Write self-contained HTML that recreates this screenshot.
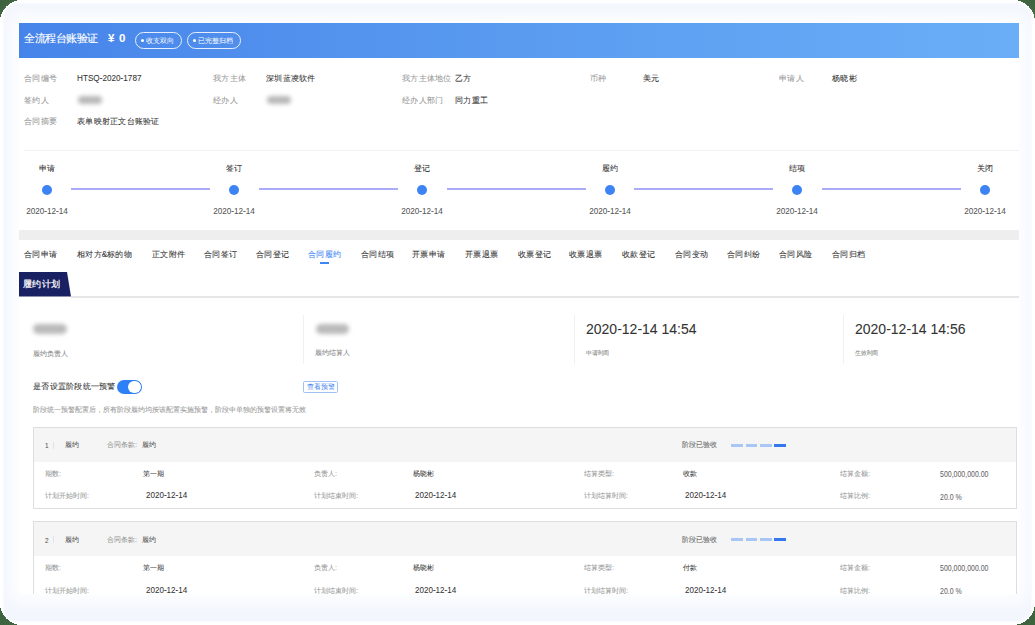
<!DOCTYPE html>
<html><head><meta charset="utf-8"><style>
*{margin:0;padding:0;box-sizing:border-box}
html,body{width:1035px;height:625px;overflow:hidden;background:#3d643f}
body{font-family:"Liberation Sans",sans-serif;position:relative;color:#333}
#outer{position:absolute;left:0;top:0}
#frame{position:absolute;left:3.5px;top:3.5px;width:1027.5px;height:617px;background:#f3f7fd;border-radius:14px;box-shadow:0 0 1.5px 0.5px #f7faff}
#page{position:absolute;left:19px;top:23px;width:1000px;height:570.6px;background:#fff;overflow:hidden}
#glow{position:absolute;left:19px;top:23px;width:1000px;height:570.6px;box-shadow:0 0 16px 6px #fff}
.t{position:absolute;white-space:nowrap;line-height:1;transform-origin:0 0;-webkit-text-stroke:0.25px currentColor}
.b{position:absolute}
.lbl{font-size:8.2px;color:#999}
.val{font-size:8.2px;color:#333}
.blur{background:#b8b8b8;border-radius:4px;filter:blur(2px)}
.blur2{background:#bababa;border-radius:5px;filter:blur(2.2px)}
.badge{position:absolute;height:17px;border:1px solid rgba(255,255,255,.85);border-radius:9px;color:#fff;font-size:7px;line-height:15px;padding-left:10px;white-space:nowrap}
.badge:before{content:"";position:absolute;left:4.5px;top:6px;width:3px;height:3px;border-radius:50%;background:#fff}
.stp{font-size:8.2px;color:#333}
.sdate{color:#555}
.dot{border-radius:50%;background:#3d83f3}
.tab{font-size:8.2px;color:#333}
.tab.act{color:#4287f5}
.slbl{font-size:7px;color:#888}
.slbl2{font-size:5.8px;color:#888}
.bigd{color:#333}
.tog{width:25px;height:14px;border-radius:7px;background:#2e80f6}
.tog:after{content:"";position:absolute;right:1px;top:0.9px;width:12.2px;height:12.2px;border-radius:50%;background:#fff}
.btn{width:35px;height:12px;border:1px solid #a0c0f6;border-radius:1.5px;color:#3d7ff0;font-size:6.8px;line-height:10px;text-align:center;white-space:nowrap}
.desc{font-size:7.2px;color:#999}
.card{border:1px solid #dedede;background:#fff}
.cl{font-size:7px;color:#999}
.cv{font-size:8px;color:#333}
</style></head>
<body>
<svg id="outer" width="1035" height="625" shape-rendering="crispEdges"><rect x="0" y="0" width="1035" height="625" rx="22" ry="22" fill="#fff"/></svg>
<div id="frame"></div>
<div id="glow"></div>
<div id="page">
<div class="b " style="left:0.00px;top:0.00px;width:1000.00px;height:35.00px;background:linear-gradient(90deg,#4784ea 0%,#5a9bf0 50%,#6aaef7 100%)"></div>
<div class="t " style="left:5.20px;top:16.20px;font-size:42.40px;transform:scale(.25) translateY(-50%);;color:#fff;-webkit-text-stroke:0.6px #fff">全流程台账验证</div>
<div class="t " style="left:89.10px;top:15.20px;font-size:46.00px;transform:scale(.25) translateY(-50%);;color:#fff;font-weight:bold">¥</div>
<div class="t " style="left:100.40px;top:15.20px;font-size:46.00px;transform:scale(.25) translateY(-50%);;color:#fff;font-weight:bold">0</div>
<div class="badge" style="left:116px;top:8.7px;width:47px">收支双向</div>
<div class="badge" style="left:168px;top:8.7px;width:54px">已完整归档</div>
<div class="t lbl" style="left:5.00px;top:55.10px;font-size:32.80px;transform:scale(.25) translateY(-50%);">合同编号</div>
<div class="t val" style="left:58.00px;top:54.60px;font-size:38.00px;transform:scale(0.2150,.25) translateY(-50%);">HTSQ-2020-1787</div>
<div class="t lbl" style="left:193.75px;top:55.10px;font-size:32.80px;transform:scale(.25) translateY(-50%);">我方主体</div>
<div class="t val" style="left:246.75px;top:55.10px;font-size:32.80px;transform:scale(.25) translateY(-50%);">深圳蓝凌软件</div>
<div class="t lbl" style="left:382.50px;top:55.10px;font-size:32.80px;transform:scale(.25) translateY(-50%);">我方主体地位</div>
<div class="t val" style="left:435.50px;top:55.10px;font-size:32.80px;transform:scale(.25) translateY(-50%);">乙方</div>
<div class="t lbl" style="left:571.25px;top:55.10px;font-size:32.80px;transform:scale(.25) translateY(-50%);">币种</div>
<div class="t val" style="left:624.25px;top:55.10px;font-size:32.80px;transform:scale(.25) translateY(-50%);">美元</div>
<div class="t lbl" style="left:760.00px;top:55.10px;font-size:32.80px;transform:scale(.25) translateY(-50%);">申请人</div>
<div class="t val" style="left:813.00px;top:55.10px;font-size:32.80px;transform:scale(.25) translateY(-50%);">杨晓彬</div>
<div class="t lbl" style="left:5.00px;top:76.70px;font-size:32.80px;transform:scale(.25) translateY(-50%);">签约人</div>
<div class="b blur" style="left:59.00px;top:72.70px;width:24.00px;height:8.00px;"></div>
<div class="t lbl" style="left:193.75px;top:76.70px;font-size:32.80px;transform:scale(.25) translateY(-50%);">经办人</div>
<div class="b blur" style="left:247.75px;top:72.70px;width:24.00px;height:8.00px;"></div>
<div class="t lbl" style="left:382.50px;top:76.70px;font-size:32.80px;transform:scale(.25) translateY(-50%);">经办人部门</div>
<div class="t val" style="left:435.50px;top:76.70px;font-size:32.80px;transform:scale(.25) translateY(-50%);">同力重工</div>
<div class="t lbl" style="left:5.00px;top:98.10px;font-size:32.80px;transform:scale(.25) translateY(-50%);">合同摘要</div>
<div class="t val" style="left:58.00px;top:98.10px;font-size:32.80px;transform:scale(.25) translateY(-50%);">表单映射正文台账验证</div>
<div class="b " style="left:5.00px;top:127.00px;width:995.00px;height:1.00px;background:#f2f2f2"></div>
<div class="t stp" style="left:27.60px;top:145.20px;font-size:32.80px;transform:scale(.25) translate(-50%,-50%);">申请</div>
<div class="b dot" style="left:22.60px;top:162.00px;width:10.00px;height:10.00px;"></div>
<div class="t sdate" style="left:27.60px;top:187.70px;font-size:36.80px;transform:scale(0.2213,.25) translate(-50%,-50%);">2020-12-14</div>
<div class="b " style="left:52.10px;top:165.00px;width:139.20px;height:2.00px;background:#aaabf9"></div>
<div class="t stp" style="left:215.30px;top:145.20px;font-size:32.80px;transform:scale(.25) translate(-50%,-50%);">签订</div>
<div class="b dot" style="left:210.30px;top:162.00px;width:10.00px;height:10.00px;"></div>
<div class="t sdate" style="left:215.30px;top:187.70px;font-size:36.80px;transform:scale(0.2213,.25) translate(-50%,-50%);">2020-12-14</div>
<div class="b " style="left:239.80px;top:165.00px;width:139.20px;height:2.00px;background:#aaabf9"></div>
<div class="t stp" style="left:403.00px;top:145.20px;font-size:32.80px;transform:scale(.25) translate(-50%,-50%);">登记</div>
<div class="b dot" style="left:398.00px;top:162.00px;width:10.00px;height:10.00px;"></div>
<div class="t sdate" style="left:403.00px;top:187.70px;font-size:36.80px;transform:scale(0.2213,.25) translate(-50%,-50%);">2020-12-14</div>
<div class="b " style="left:427.50px;top:165.00px;width:139.20px;height:2.00px;background:#aaabf9"></div>
<div class="t stp" style="left:590.70px;top:145.20px;font-size:32.80px;transform:scale(.25) translate(-50%,-50%);">履约</div>
<div class="b dot" style="left:585.70px;top:162.00px;width:10.00px;height:10.00px;"></div>
<div class="t sdate" style="left:590.70px;top:187.70px;font-size:36.80px;transform:scale(0.2213,.25) translate(-50%,-50%);">2020-12-14</div>
<div class="b " style="left:615.20px;top:165.00px;width:139.20px;height:2.00px;background:#aaabf9"></div>
<div class="t stp" style="left:778.40px;top:145.20px;font-size:32.80px;transform:scale(.25) translate(-50%,-50%);">结项</div>
<div class="b dot" style="left:773.40px;top:162.00px;width:10.00px;height:10.00px;"></div>
<div class="t sdate" style="left:778.40px;top:187.70px;font-size:36.80px;transform:scale(0.2213,.25) translate(-50%,-50%);">2020-12-14</div>
<div class="b " style="left:802.90px;top:165.00px;width:139.20px;height:2.00px;background:#aaabf9"></div>
<div class="t stp" style="left:966.10px;top:145.20px;font-size:32.80px;transform:scale(.25) translate(-50%,-50%);">关闭</div>
<div class="b dot" style="left:961.10px;top:162.00px;width:10.00px;height:10.00px;"></div>
<div class="t sdate" style="left:966.10px;top:187.70px;font-size:36.80px;transform:scale(0.2213,.25) translate(-50%,-50%);">2020-12-14</div>
<div class="b " style="left:0.00px;top:206.80px;width:1000.00px;height:10.40px;background:#eeeeee"></div>
<div class="t tab" style="left:5.20px;top:231.00px;font-size:32.80px;transform:scale(.25) translateY(-50%);">合同申请</div>
<div class="t tab" style="left:57.80px;top:231.00px;font-size:32.80px;transform:scale(.25) translateY(-50%);">相对方&amp;标的物</div>
<div class="t tab" style="left:132.50px;top:231.00px;font-size:32.80px;transform:scale(.25) translateY(-50%);">正文附件</div>
<div class="t tab" style="left:184.50px;top:231.00px;font-size:32.80px;transform:scale(.25) translateY(-50%);">合同签订</div>
<div class="t tab" style="left:237.00px;top:231.00px;font-size:32.80px;transform:scale(.25) translateY(-50%);">合同登记</div>
<div class="t tab act" style="left:289.00px;top:231.00px;font-size:32.80px;transform:scale(.25) translateY(-50%);">合同履约</div>
<div class="t tab" style="left:341.50px;top:231.00px;font-size:32.80px;transform:scale(.25) translateY(-50%);">合同结项</div>
<div class="t tab" style="left:393.40px;top:231.00px;font-size:32.80px;transform:scale(.25) translateY(-50%);">开票申请</div>
<div class="t tab" style="left:446.00px;top:231.00px;font-size:32.80px;transform:scale(.25) translateY(-50%);">开票退票</div>
<div class="t tab" style="left:498.50px;top:231.00px;font-size:32.80px;transform:scale(.25) translateY(-50%);">收票登记</div>
<div class="t tab" style="left:550.40px;top:231.00px;font-size:32.80px;transform:scale(.25) translateY(-50%);">收票退票</div>
<div class="t tab" style="left:603.00px;top:231.00px;font-size:32.80px;transform:scale(.25) translateY(-50%);">收款登记</div>
<div class="t tab" style="left:655.60px;top:231.00px;font-size:32.80px;transform:scale(.25) translateY(-50%);">合同变动</div>
<div class="t tab" style="left:708.20px;top:231.00px;font-size:32.80px;transform:scale(.25) translateY(-50%);">合同纠纷</div>
<div class="t tab" style="left:760.40px;top:231.00px;font-size:32.80px;transform:scale(.25) translateY(-50%);">合同风险</div>
<div class="t tab" style="left:812.60px;top:231.00px;font-size:32.80px;transform:scale(.25) translateY(-50%);">合同归档</div>
<div class="b " style="left:301.00px;top:239.00px;width:9.00px;height:1.50px;background:#3f85f3"></div>
<svg class="b" style="left:0px;top:249px" width="53" height="25"><path d="M0 0 H48 L52 24.5 H0 Z" fill="#1a2163"/></svg>
<div class="t " style="left:3.80px;top:261.30px;font-size:37.20px;transform:scale(.25) translateY(-50%);;color:#fff;-webkit-text-stroke:0.8px #fff">履约计划</div>
<div class="b " style="left:52.00px;top:273.00px;width:948.00px;height:1.50px;background:#e6e6e6"></div>
<div class="b " style="left:284.00px;top:292.00px;width:1.00px;height:49.00px;background:#f1f1f1"></div>
<div class="b " style="left:554.50px;top:292.00px;width:1.00px;height:49.00px;background:#f1f1f1"></div>
<div class="b " style="left:824.00px;top:292.00px;width:1.00px;height:49.00px;background:#f1f1f1"></div>
<div class="b blur2" style="left:14.00px;top:301.00px;width:34.00px;height:10.00px;"></div>
<div class="t slbl" style="left:13.60px;top:330.80px;font-size:28.00px;transform:scale(.25) translateY(-50%);">履约负责人</div>
<div class="b blur2" style="left:297.00px;top:301.00px;width:33.00px;height:10.00px;"></div>
<div class="t slbl" style="left:296.00px;top:330.40px;font-size:28.00px;transform:scale(.25) translateY(-50%);">履约结算人</div>
<div class="t bigd" style="left:566.50px;top:305.60px;font-size:56.00px;transform:scale(.25) translateY(-50%);">2020-12-14 14:54</div>
<div class="t slbl2" style="left:566.50px;top:330.20px;font-size:23.20px;transform:scale(.25) translateY(-50%);">申请时间</div>
<div class="t bigd" style="left:836.20px;top:305.60px;font-size:56.00px;transform:scale(.25) translateY(-50%);">2020-12-14 14:56</div>
<div class="t slbl2" style="left:836.20px;top:330.20px;font-size:23.20px;transform:scale(.25) translateY(-50%);">生效时间</div>
<div class="t val" style="left:13.80px;top:363.40px;font-size:32.80px;transform:scale(.25) translateY(-50%);">是否设置阶段统一预警</div>
<div class="b tog" style="left:97.6px;top:356.7px"></div>
<div class="b btn" style="left:284px;top:357.7px">查看预警</div>
<div class="t desc" style="left:13.80px;top:386.70px;font-size:28.00px;transform:scale(.25) translateY(-50%);">阶段统一预警配置后，所有阶段履约均按该配置实施预警，阶段中单独的预警设置将无效</div>
<div class="b card" style="left:13.50px;top:403.50px;width:984.50px;height:82.00px;"></div>
<div class="b " style="left:14.50px;top:404.50px;width:982.50px;height:34.30px;background:#f5f5f5"></div>
<div class="t cv" style="left:26.30px;top:422.00px;font-size:30.00px;transform:scale(0.2125,.25) translateY(-50%);;color:#555">1</div>
<div class="b " style="left:34.30px;top:418.50px;width:0.80px;height:7.00px;background:#e3e3e3"></div>
<div class="t cv" style="left:45.90px;top:422.00px;font-size:28.00px;transform:scale(.25) translateY(-50%);;color:#555">履约</div>
<div class="t cl" style="left:87.90px;top:422.00px;font-size:28.00px;transform:scale(.25) translateY(-50%);">合同条款:</div>
<div class="t cv" style="left:123.40px;top:422.00px;font-size:28.00px;transform:scale(.25) translateY(-50%);;color:#555">履约</div>
<div class="t cl" style="left:663.00px;top:422.00px;font-size:28.00px;transform:scale(.25) translateY(-50%);color:#666">阶段已验收</div>
<div class="b " style="left:712.30px;top:420.60px;width:11.80px;height:3.40px;background:#a9c7f6"></div>
<div class="b " style="left:726.60px;top:420.60px;width:11.80px;height:3.40px;background:#a9c7f6"></div>
<div class="b " style="left:740.90px;top:420.60px;width:11.80px;height:3.40px;background:#a9c7f6"></div>
<div class="b " style="left:755.20px;top:420.60px;width:11.80px;height:3.40px;background:#3478ee"></div>
<div class="t cl" style="left:26.00px;top:450.50px;font-size:28.00px;transform:scale(.25) translateY(-50%);">期数:</div>
<div class="t cv" style="left:123.70px;top:450.50px;font-size:28.40px;transform:scale(.25) translateY(-50%);;color:#444">第一期</div>
<div class="t cl" style="left:294.70px;top:450.50px;font-size:28.00px;transform:scale(.25) translateY(-50%);">负责人:</div>
<div class="t cv" style="left:394.40px;top:450.50px;font-size:28.40px;transform:scale(.25) translateY(-50%);;color:#444">杨晓彬</div>
<div class="t cl" style="left:564.70px;top:450.50px;font-size:28.00px;transform:scale(.25) translateY(-50%);">结算类型:</div>
<div class="t cv" style="left:663.50px;top:450.50px;font-size:28.40px;transform:scale(.25) translateY(-50%);;color:#444">收款</div>
<div class="t cl" style="left:821.00px;top:450.50px;font-size:28.00px;transform:scale(.25) translateY(-50%);">结算金额:</div>
<div class="t cv" style="left:920.60px;top:450.50px;font-size:34.00px;transform:scale(0.2050,.25) translateY(-50%);;color:#666">500,000,000.00</div>
<div class="t cl" style="left:26.00px;top:473.00px;font-size:28.00px;transform:scale(.25) translateY(-50%);">计划开始时间:</div>
<div class="t cv" style="left:126.60px;top:472.20px;font-size:38.00px;transform:scale(0.2115,.25) translateY(-50%);">2020-12-14</div>
<div class="t cl" style="left:294.70px;top:473.00px;font-size:28.00px;transform:scale(.25) translateY(-50%);">计划结束时间:</div>
<div class="t cv" style="left:396.30px;top:472.20px;font-size:38.00px;transform:scale(0.2115,.25) translateY(-50%);">2020-12-14</div>
<div class="t cl" style="left:564.70px;top:473.00px;font-size:28.00px;transform:scale(.25) translateY(-50%);">计划结算时间:</div>
<div class="t cv" style="left:666.30px;top:472.20px;font-size:38.00px;transform:scale(0.2115,.25) translateY(-50%);">2020-12-14</div>
<div class="t cl" style="left:821.00px;top:473.00px;font-size:28.00px;transform:scale(.25) translateY(-50%);">结算比例:</div>
<div class="t cv" style="left:920.60px;top:473.80px;font-size:34.00px;transform:scale(0.2050,.25) translateY(-50%);;color:#666">20.0 %</div>
<div class="b card" style="left:13.50px;top:498.00px;width:984.50px;height:120.00px;"></div>
<div class="b " style="left:14.50px;top:499.00px;width:982.50px;height:34.30px;background:#f5f5f5"></div>
<div class="t cv" style="left:26.30px;top:516.50px;font-size:30.00px;transform:scale(0.2125,.25) translateY(-50%);;color:#555">2</div>
<div class="b " style="left:34.30px;top:513.00px;width:0.80px;height:7.00px;background:#e3e3e3"></div>
<div class="t cv" style="left:45.90px;top:516.50px;font-size:28.00px;transform:scale(.25) translateY(-50%);;color:#555">履约</div>
<div class="t cl" style="left:87.90px;top:516.50px;font-size:28.00px;transform:scale(.25) translateY(-50%);">合同条款:</div>
<div class="t cv" style="left:123.40px;top:516.50px;font-size:28.00px;transform:scale(.25) translateY(-50%);;color:#555">履约</div>
<div class="t cl" style="left:663.00px;top:516.50px;font-size:28.00px;transform:scale(.25) translateY(-50%);color:#666">阶段已验收</div>
<div class="b " style="left:712.30px;top:515.10px;width:11.80px;height:3.40px;background:#a9c7f6"></div>
<div class="b " style="left:726.60px;top:515.10px;width:11.80px;height:3.40px;background:#a9c7f6"></div>
<div class="b " style="left:740.90px;top:515.10px;width:11.80px;height:3.40px;background:#a9c7f6"></div>
<div class="b " style="left:755.20px;top:515.10px;width:11.80px;height:3.40px;background:#3478ee"></div>
<div class="t cl" style="left:26.00px;top:545.00px;font-size:28.00px;transform:scale(.25) translateY(-50%);">期数:</div>
<div class="t cv" style="left:123.70px;top:545.00px;font-size:28.40px;transform:scale(.25) translateY(-50%);;color:#444">第一期</div>
<div class="t cl" style="left:294.70px;top:545.00px;font-size:28.00px;transform:scale(.25) translateY(-50%);">负责人:</div>
<div class="t cv" style="left:394.40px;top:545.00px;font-size:28.40px;transform:scale(.25) translateY(-50%);;color:#444">杨晓彬</div>
<div class="t cl" style="left:564.70px;top:545.00px;font-size:28.00px;transform:scale(.25) translateY(-50%);">结算类型:</div>
<div class="t cv" style="left:663.50px;top:545.00px;font-size:28.40px;transform:scale(.25) translateY(-50%);;color:#444">付款</div>
<div class="t cl" style="left:821.00px;top:545.00px;font-size:28.00px;transform:scale(.25) translateY(-50%);">结算金额:</div>
<div class="t cv" style="left:920.60px;top:545.00px;font-size:34.00px;transform:scale(0.2050,.25) translateY(-50%);;color:#666">500,000,000.00</div>
<div class="t cl" style="left:26.00px;top:567.50px;font-size:28.00px;transform:scale(.25) translateY(-50%);">计划开始时间:</div>
<div class="t cv" style="left:126.60px;top:566.70px;font-size:38.00px;transform:scale(0.2115,.25) translateY(-50%);">2020-12-14</div>
<div class="t cl" style="left:294.70px;top:567.50px;font-size:28.00px;transform:scale(.25) translateY(-50%);">计划结束时间:</div>
<div class="t cv" style="left:396.30px;top:566.70px;font-size:38.00px;transform:scale(0.2115,.25) translateY(-50%);">2020-12-14</div>
<div class="t cl" style="left:564.70px;top:567.50px;font-size:28.00px;transform:scale(.25) translateY(-50%);">计划结算时间:</div>
<div class="t cv" style="left:666.30px;top:566.70px;font-size:38.00px;transform:scale(0.2115,.25) translateY(-50%);">2020-12-14</div>
<div class="t cl" style="left:821.00px;top:567.50px;font-size:28.00px;transform:scale(.25) translateY(-50%);">结算比例:</div>
<div class="t cv" style="left:920.60px;top:568.30px;font-size:34.00px;transform:scale(0.2050,.25) translateY(-50%);;color:#666">20.0 %</div>
</div>
</body></html>
